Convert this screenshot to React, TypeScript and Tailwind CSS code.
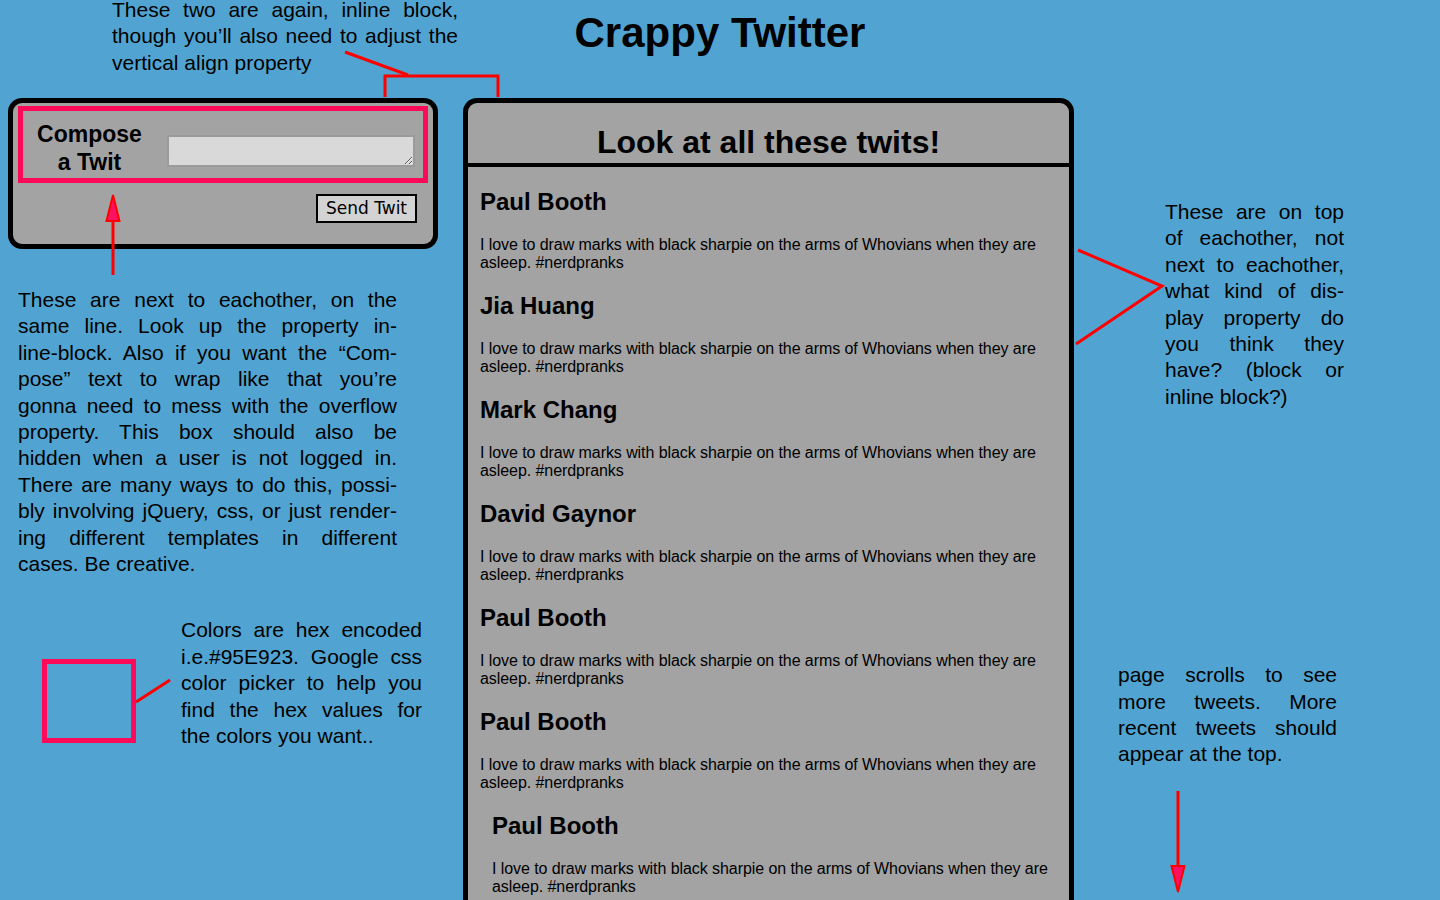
const TWEETS = [
  { name: 'Paul Booth' },
  { name: 'Jia Huang' },
  { name: 'Mark Chang' },
  { name: 'David Gaynor' },
  { name: 'Paul Booth' },
  { name: 'Paul Booth' },
  { name: 'Paul Booth', indent: true },
]

const BODY = 'I love to draw marks with black sharpie on the arms of Whovians when they are asleep. #nerdpranks'

// justified note, one div per line so the breaks match the mockup
function Note({ lines, className }: { lines: string[]; className?: string }) {
  return (
    <div className={`text-[21px] leading-[26.4px] text-black ${className ?? ''}`}>
      {lines.map((l, i) => (
        <div key={i} className={i < lines.length - 1 ? 'text-justify [text-align-last:justify]' : ''}>
          {l}
        </div>
      ))}
    </div>
  )
}

function Tweet({ name, indent }: { name: string; indent?: boolean }) {
  return (
    <div className={`pb-[20px] ${indent ? 'pl-[24px]' : 'pl-[12px]'}`}>
      <h2 className="text-[24px] font-bold leading-[28px]">{name}</h2>
      <p className="mt-[20px] w-[570px] text-[16px] leading-[18px] tracking-[-0.07px]">{BODY}</p>
    </div>
  )
}

function Annotations() {
  return (
    <svg className="pointer-events-none absolute left-0 top-0" width="1440" height="900" viewBox="0 0 1440 900">
      <g stroke="#ff0000" strokeWidth="3" fill="none">
        <line x1="345" y1="52" x2="408" y2="75" />
        <polyline points="385,97 385,76 498,76 498,97" />
        <line x1="113" y1="275" x2="113" y2="220" />
        <line x1="136" y1="702" x2="170" y2="680" />
        <polyline points="1078,250 1162,286 1076,344" />
        <line x1="1178" y1="791" x2="1178" y2="866" />
      </g>
      <polygon points="113,195 106.5,221 119.5,221" fill="#ff1060" stroke="#ff0000" strokeWidth="2" />
      <polygon points="1171.5,866 1184.5,866 1178,892" fill="#ff1060" stroke="#ff0000" strokeWidth="2" />
    </svg>
  )
}

export default function App() {
  return (
    <div className="relative h-[900px] w-[1440px] overflow-hidden bg-[#51a4d1] font-['Liberation_Sans',Arial,sans-serif] text-black">
      {/* header */}
      <div className="grid h-[98px] grid-cols-[1fr_auto_1fr] items-start">
        <Note
          className="-mt-[3px] ml-[112px] w-[346px]"
          lines={['These two are again, inline block,', 'though you’ll also need to adjust the', 'vertical align property']}
        />
        <h1 className="mt-[12px] text-[42px] font-bold leading-[42px]">Crappy Twitter</h1>
        <div />
      </div>

      <div className="flex items-start">
        {/* left column */}
        <div className="ml-[8px] w-[430px]">
          <div className="h-[151px] rounded-[14px] border-[5px] border-black bg-[#a3a3a3] px-[5px] pt-[3px]">
            <div className="flex h-[77px] items-start border-[5px] border-[#ff0a58]">
              <div className="ml-[7px] mt-[9px] w-[119px] text-center text-[23px] font-bold leading-[28px]">Compose a Twit</div>
              <textarea className="ml-[18px] mt-[24px] h-[32px] w-[248px] border-2 border-[#9b9b9b] bg-[#d9d9d9] outline-none" />
            </div>
            <div className="mt-[11px] flex justify-end pr-[11px]">
              <button className="h-[29px] w-[101px] border-2 border-black bg-[#d3d3d3] font-['DejaVu_Sans',sans-serif] text-[17px] leading-none">
                Send Twit
              </button>
            </div>
          </div>

          <Note
            className="ml-[10px] mt-[38px] w-[379px]"
            lines={[
              'These are next to eachother, on the',
              'same line. Look up the property in-',
              'line-block. Also if you want the “Com-',
              'pose” text to wrap like that you’re',
              'gonna need to mess with the overflow',
              'property. This box should also be',
              'hidden when a user is not logged in.',
              'There are many ways to do this, possi-',
              'bly involving jQuery, css, or just render-',
              'ing different templates in different',
              'cases. Be creative.',
            ]}
          />

          <div className="mt-[40px] flex items-start">
            <div className="ml-[34px] mt-[42px] h-[84px] w-[94px] border-[5px] border-[#ff0a58]" />
            <Note
              className="ml-[45px] w-[241px]"
              lines={[
                'Colors are hex encoded',
                'i.e.#95E923. Google css',
                'color picker to help you',
                'find the hex values for',
                'the colors you want..',
              ]}
            />
          </div>
        </div>

        {/* feed */}
        <div className="ml-[25px] h-[860px] w-[611px] shrink-0 rounded-t-[14px] border-[5px] border-b-0 border-black bg-[#a3a3a3]">
          <div className="h-[64px] border-b-4 border-black pt-[19px] text-center text-[32px] font-bold leading-[40px]">
            Look at all these twits!
          </div>
          <div className="pt-[21px]">
            {TWEETS.map((t, i) => (
              <Tweet key={i} name={t.name} indent={t.indent} />
            ))}
          </div>
        </div>

        {/* right column */}
        <div className="flex-1">
          <Note
            className="ml-[91px] mt-[101px] w-[179px]"
            lines={[
              'These are on top',
              'of eachother, not',
              'next to eachother,',
              'what kind of dis-',
              'play property do',
              'you think they',
              'have? (block or',
              'inline block?)',
            ]}
          />
          <Note
            className="ml-[44px] mt-[252px] w-[219px]"
            lines={['page scrolls to see', 'more tweets. More', 'recent tweets should', 'appear at the top.']}
          />
        </div>
      </div>

      <Annotations />
    </div>
  )
}
